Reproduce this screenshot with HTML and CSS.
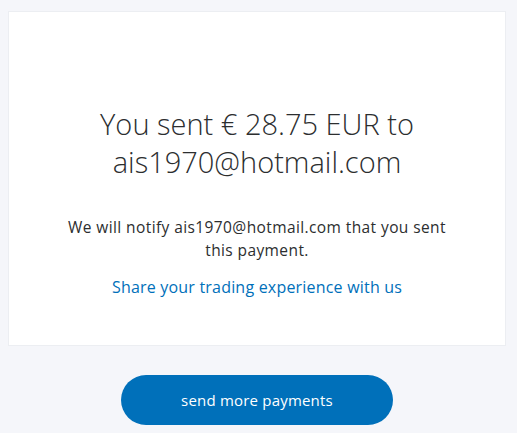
FILE: index.html
```html
<!DOCTYPE html>
<html lang="en">
<head>
  <meta charset="UTF-8">
  <title>Payment sent</title>
  <link rel="stylesheet" href="styles.css">
</head>
<body>
  <main class="page">
    <section class="card">
      <h1 class="title">You sent € 28.75 EUR to ais1970@hotmail.com</h1>
      <p class="note">We will notify ais1970@hotmail.com that you sent this payment.</p>
      <a class="share" href="#">Share your trading experience with us</a>
    </section>
    <div class="actions">
      <button class="btn-primary">send more payments</button>
    </div>
  </main>
</body>
</html>
```

FILE: styles.css
```css
:root {
  --bg: #f5f6fa;
  --card: #ffffff;
  --text: #2c2e2f;
  --blue: #0070ba;
}
* { box-sizing: border-box; margin: 0; padding: 0; }
body {
  font-family: 'Open Sans', sans-serif;
  background: var(--bg);
  color: var(--text);
}
.page {
  padding: 11px 11px 0 8px;
}
.card {
  background: var(--card);
  border: 1px solid #eceef2;
  min-height: 335px;
  padding: 93px 30px 30px;
  display: flex;
  flex-direction: column;
  align-items: center;
  text-align: center;
}
.title {
  font-size: 29px;
  font-weight: 300;
  line-height: 38px;
  max-width: 330px;
  color: var(--text);
}
.note {
  margin-top: 35px;
  font-size: 15.5px;
  letter-spacing: 0.4px;
  line-height: 23px;
  max-width: 390px;
}
.share {
  margin-top: 14px;
  font-size: 16px;
  letter-spacing: 0.2px;
  line-height: 23px;
  color: var(--blue);
  text-decoration: none;
}
.actions {
  display: flex;
  justify-content: center;
  padding-top: 29px;
}
.btn-primary {
  width: 272px;
  height: 50px;
  border: none;
  border-radius: 25px;
  background: var(--blue);
  color: #fff;
  font-family: 'Open Sans', sans-serif;
  font-size: 15px;
  font-weight: 500;
  letter-spacing: 0.2px;
  cursor: pointer;
}
```
